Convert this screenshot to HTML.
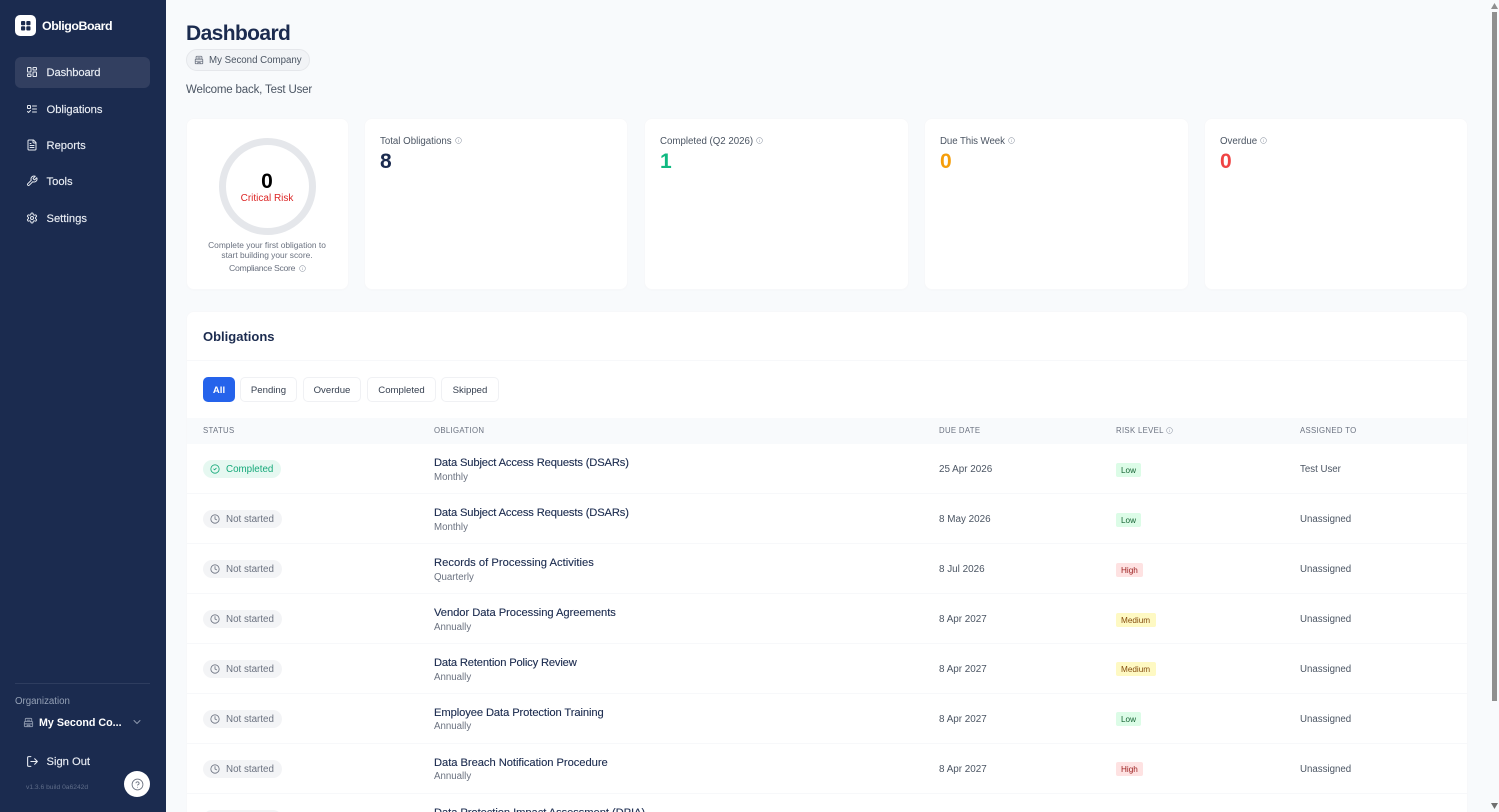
<!DOCTYPE html>
<html lang="en"><head><meta charset="utf-8"><title>ObligoBoard Dashboard</title>
<style>
*{box-sizing:border-box;margin:0;padding:0}
html,body{width:1499px;height:812px;overflow:hidden;background:#f8fafc;font-family:"Liberation Sans",Arial,sans-serif}
#root{position:relative;width:1499px;height:812px;overflow:hidden;background:#f8fafc}
.t{position:absolute;white-space:nowrap;line-height:14px;height:14px}
.b{position:absolute}
svg.i{position:absolute;fill:none;stroke:currentColor;stroke-width:2;stroke-linecap:round;stroke-linejoin:round}
#side{position:absolute;left:0;top:0;width:166px;height:812px;background:#1b2b4f;color:#fff}
.nav{font-size:11.2px;color:#e8ecf3;left:46.5px;-webkit-text-stroke:.15px #e8ecf3}
.nv{left:26px;width:12px;height:12px;color:#e4e8ef}
.card{position:absolute;top:118px;height:172px;background:#fff;border:1px solid #f7f8fa;border-radius:8px;box-shadow:0 1px 2px rgba(0,0,0,.012)}
.ct{top:135px;font-size:9.7px;color:#4b5563}
.cv{top:151px;font-size:21px;line-height:22px;height:22px;font-weight:700}
.f{position:absolute;top:377px;height:25px;background:#fff;border:1px solid #f0f1f4;border-radius:5px;font-size:9.6px;line-height:25px;text-align:center;color:#374151}
.th{top:424px;font-size:7.8px;letter-spacing:.32px;color:#6b7280}
.row{position:absolute;left:187px;width:1280px;height:50px;border-bottom:1px solid #f7f8fa;background:#fff}
.st{position:absolute;left:16px;top:16px;height:18px;border-radius:9px}
.st span{position:absolute;left:23px;top:2.5px;font-size:9.8px;line-height:14px;white-space:nowrap}
.st svg{left:7px;top:3.5px;width:10px;height:10px}
.ok{width:78px;background:#e6f8f1;color:#16a97a}
.ns{width:79px;background:#f3f4f6;color:#6b7280}
.n{left:247px;top:12px;font-size:11.2px;letter-spacing:-.05px;color:#1b2b4f;-webkit-text-stroke:.12px #1b2b4f}
.s{left:247px;top:27px;font-size:9.7px;color:#6b7280}
.d{left:752px;top:19px;font-size:9.9px;color:#4b5563}
.a{left:1113px;top:19px;font-size:9.7px;color:#4b5563}
.r{position:absolute;left:929px;top:19px;height:14px;border-radius:2px;font-size:8.2px;line-height:15px;padding-left:5px}
.lo{width:25px;background:#dcfce7;color:#166534}
.hi{width:27px;background:#fee2e2;color:#991b1b}
.me{width:40px;background:#fef9c3;color:#854d0e}
</style></head><body>
<div id="root">
<svg width="0" height="0" style="position:absolute">
<symbol id="dash" viewBox="0 0 24 24"><rect x="3" y="3" width="7" height="9" rx="1"/><rect x="14" y="3" width="7" height="5" rx="1"/><rect x="14" y="12" width="7" height="9" rx="1"/><rect x="3" y="16" width="7" height="5" rx="1"/></symbol>
<symbol id="todo" viewBox="0 0 24 24"><rect x="3" y="5" width="6" height="6" rx="1"/><path d="m3 17 2 2 4-4M13 6h8M13 12h8M13 18h8"/></symbol>
<symbol id="file" viewBox="0 0 24 24"><path d="M15 2H6a2 2 0 0 0-2 2v16a2 2 0 0 0 2 2h12a2 2 0 0 0 2-2V7Z"/><path d="M14 2v4a2 2 0 0 0 2 2h4M10 9H8M16 13H8M16 17H8"/></symbol>
<symbol id="wrench" viewBox="0 0 24 24"><path d="M14.7 6.3a1 1 0 0 0 0 1.4l1.6 1.6a1 1 0 0 0 1.4 0l3.77-3.77a6 6 0 0 1-7.94 7.94l-6.91 6.91a2.12 2.12 0 0 1-3-3l6.91-6.91a6 6 0 0 1 7.94-7.94l-3.76 3.76z"/></symbol>
<symbol id="gear" viewBox="0 0 24 24"><path d="M12.22 2h-.44a2 2 0 0 0-2 2v.18a2 2 0 0 1-1 1.73l-.43.25a2 2 0 0 1-2 0l-.15-.08a2 2 0 0 0-2.73.73l-.22.38a2 2 0 0 0 .73 2.73l.15.1a2 2 0 0 1 1 1.72v.51a2 2 0 0 1-1 1.74l-.15.09a2 2 0 0 0-.73 2.73l.22.38a2 2 0 0 0 2.73.73l.15-.08a2 2 0 0 1 2 0l.43.25a2 2 0 0 1 1 1.73V20a2 2 0 0 0 2 2h.44a2 2 0 0 0 2-2v-.18a2 2 0 0 1 1-1.73l.43-.25a2 2 0 0 1 2 0l.15.08a2 2 0 0 0 2.73-.73l.22-.39a2 2 0 0 0-.73-2.73l-.15-.08a2 2 0 0 1-1-1.74v-.5a2 2 0 0 1 1-1.74l.15-.09a2 2 0 0 0 .73-2.73l-.22-.38a2 2 0 0 0-2.73-.73l-.15.08a2 2 0 0 1-2 0l-.43-.25a2 2 0 0 1-1-1.73V4a2 2 0 0 0-2-2z"/><circle cx="12" cy="12" r="3"/></symbol>
<symbol id="bld" viewBox="0 0 24 24"><path d="M7 3h10a2 2 0 0 1 2 2v5H5V5a2 2 0 0 1 2-2zM4 10h16a1 1 0 0 1 1 1v9a1 1 0 0 1-1 1H4a1 1 0 0 1-1-1v-9a1 1 0 0 1 1-1zM3 15h18M9 7h6M9 21v-3h6v3"/></symbol>
<symbol id="out" viewBox="0 0 24 24"><path d="M9 21H5a2 2 0 0 1-2-2V5a2 2 0 0 1 2-2h4M16 17l5-5-5-5M21 12H9"/></symbol>
<symbol id="help" viewBox="0 0 24 24"><circle cx="12" cy="12" r="10"/><path d="M9.09 9a3 3 0 0 1 5.83 1c0 2-3 3-3 3M12 17h.01"/></symbol>
<symbol id="clock" viewBox="0 0 24 24"><circle cx="12" cy="12" r="10"/><path d="M12 6v6l4 2"/></symbol>
<symbol id="check" viewBox="0 0 24 24"><circle cx="12" cy="12" r="10"/><path d="m9 12 2 2 4-4"/></symbol>
<symbol id="info" viewBox="0 0 24 24"><circle cx="12" cy="12" r="10"/><path d="M12 16v-4M12 8h.01"/></symbol>
</svg>

<div id="side">
  <div class="b" style="left:15px;top:15px;width:21px;height:21px;background:#fff;border-radius:5px"></div>
  <svg class="b" style="left:15px;top:15px" width="21" height="21"><g fill="#1b2b4f"><rect x="6" y="6" width="4.2" height="4.2" rx="1"/><rect x="11.3" y="6" width="4.2" height="4.2" rx="1"/><rect x="6" y="11.3" width="4.2" height="4.2" rx="1"/><rect x="11.3" y="11.3" width="4.2" height="4.2" rx="1"/></g></svg>
  <div class="t" style="left:42px;top:19px;font-size:12.4px;font-weight:700;letter-spacing:-.45px;color:#fff">ObligoBoard</div>

  <div class="b" style="left:15px;top:57px;width:135px;height:31px;background:#323f60;border-radius:6px"></div>
  <svg class="i nv" style="top:66px"><use href="#dash"/></svg><div class="t nav" style="top:66px;letter-spacing:-.1px">Dashboard</div>
  <svg class="i nv" style="top:103px"><use href="#todo"/></svg><div class="t nav" style="top:103px">Obligations</div>
  <svg class="i nv" style="top:139px"><use href="#file"/></svg><div class="t nav" style="top:139px">Reports</div>
  <svg class="i nv" style="top:175px"><use href="#wrench"/></svg><div class="t nav" style="top:175px">Tools</div>
  <svg class="i nv" style="top:212px"><use href="#gear"/></svg><div class="t nav" style="top:212px">Settings</div>

  <div class="b" style="left:15px;top:683px;width:135px;height:1px;background:#2e3d5f"></div>
  <div class="t" style="left:15px;top:695px;font-size:9.7px;color:#94a0b5">Organization</div>
  <svg class="i" style="left:23px;top:717px;width:11px;height:11px;color:#8d98ad"><use href="#bld"/></svg>
  <div class="t" style="left:39px;top:716px;font-size:10.7px;font-weight:700;color:#fff">My Second Co...</div>
  <svg class="i" style="left:133px;top:718px;width:8px;height:8px;color:#8d98ad"><path d="M1 2.5 4 5.5 7 2.5" stroke-width="1"/></svg>
  <svg class="i" style="left:26px;top:755px;width:13px;height:13px;color:#e8ecf3"><use href="#out"/></svg>
  <div class="t nav" style="top:755px">Sign Out</div>
  <div class="t" style="left:26px;top:781px;font-size:6.7px;color:#5f6d89">v1.3.6 build 0a6242d</div>
  <div class="b" style="left:124px;top:771px;width:26px;height:26px;background:#fff;border-radius:50%"></div>
  <svg class="i" style="left:131px;top:778px;width:13px;height:13px;color:#6b7280;stroke-width:1.6"><use href="#help"/></svg>
</div>

<div class="t" style="left:186px;top:22px;height:24px;line-height:24px;font-size:21px;font-weight:700;letter-spacing:-.6px;color:#1b2b4f">Dashboard</div>
<div class="b" style="left:186px;top:49px;width:124px;height:22px;background:#f1f3f6;border:1px solid #e5e7eb;border-radius:11px"></div>
<svg class="i" style="left:194px;top:55px;width:10px;height:10px;color:#6b7280"><use href="#bld"/></svg>
<div class="t" style="left:209px;top:54px;font-size:9.7px;color:#4b5563">My Second Company</div>
<div class="t" style="left:186px;top:83px;font-size:11.5px;letter-spacing:-.17px;color:#4b5563">Welcome back, Test User</div>

<div class="card" style="left:186px;width:163px"></div>
<svg class="b" style="left:219px;top:138px" width="97" height="97"><circle cx="48.5" cy="48.5" r="45" fill="none" stroke="#e5e7eb" stroke-width="7"/></svg>
<div class="t" style="left:217px;width:100px;text-align:center;top:171px;height:22px;line-height:22px;font-size:21px;font-weight:700;color:#000">0</div>
<div class="t" style="left:217px;width:100px;text-align:center;top:192px;font-size:10px;color:#dc2626">Critical Risk</div>
<div class="t" style="left:187px;width:160px;text-align:center;top:238px;font-size:8.4px;color:#6b7280">Complete your first obligation to</div>
<div class="t" style="left:187px;width:160px;text-align:center;top:248px;font-size:8.4px;color:#6b7280">start building your score.</div>
<div class="t" style="left:229px;top:261px;font-size:8.7px;letter-spacing:-.3px;color:#6b7280">Compliance Score</div>
<svg class="i" style="left:299px;top:265px;width:7px;height:7px;color:#9ca3af"><use href="#info"/></svg>

<div class="card" style="left:364px;width:264px"></div>
<div class="t ct" style="left:380px">Total Obligations</div>
<svg class="i" style="left:455px;top:137px;width:7px;height:7px;color:#9ca3af"><use href="#info"/></svg>
<div class="t cv" style="left:380px;color:#1b2b4f">8</div>

<div class="card" style="left:644px;width:265px"></div>
<div class="t ct" style="left:660px">Completed (Q2 2026)</div>
<svg class="i" style="left:756px;top:137px;width:7px;height:7px;color:#9ca3af"><use href="#info"/></svg>
<div class="t cv" style="left:660px;color:#10b981">1</div>

<div class="card" style="left:924px;width:265px"></div>
<div class="t ct" style="left:940px;letter-spacing:-.08px">Due This Week</div>
<svg class="i" style="left:1008px;top:137px;width:7px;height:7px;color:#9ca3af"><use href="#info"/></svg>
<div class="t cv" style="left:940px;color:#f59e0b">0</div>

<div class="card" style="left:1204px;width:264px"></div>
<div class="t ct" style="left:1220px">Overdue</div>
<svg class="i" style="left:1260px;top:137px;width:7px;height:7px;color:#9ca3af"><use href="#info"/></svg>
<div class="t cv" style="left:1220px;color:#ef4444">0</div>

<div class="b" style="left:186px;top:311px;width:1282px;height:520px;background:#fff;border:1px solid #f7f8fa;border-radius:8px"></div>
<div class="t" style="left:203px;top:330px;font-size:13px;font-weight:700;color:#1b2b4f">Obligations</div>
<div class="b" style="left:187px;top:360px;width:1280px;height:1px;background:#f7f8fa"></div>
<div class="f" style="left:203px;width:32px;background:#2563eb;border-color:#2563eb;color:#fff;font-weight:700">All</div>
<div class="f" style="left:240px;width:57px">Pending</div>
<div class="f" style="left:303px;width:58px">Overdue</div>
<div class="f" style="left:367px;width:69px">Completed</div>
<div class="f" style="left:441px;width:58px">Skipped</div>

<div class="b" style="left:187px;top:418px;width:1280px;height:26px;background:#f8fafc"></div>
<div class="t th" style="left:203px">STATUS</div>
<div class="t th" style="left:434px">OBLIGATION</div>
<div class="t th" style="left:939px">DUE DATE</div>
<div class="t th" style="left:1116px">RISK LEVEL</div>
<svg class="i" style="left:1166px;top:427px;width:7px;height:7px;color:#9ca3af"><use href="#info"/></svg>
<div class="t th" style="left:1300px">ASSIGNED TO</div>

<div class="row" style="top:444px">
  <div class="st ok"><svg class="i"><use href="#check"/></svg><span>Completed</span></div>
  <div class="t n" style="letter-spacing:-.15px">Data Subject Access Requests (DSARs)</div><div class="t s">Monthly</div>
  <div class="t d">25 Apr 2026</div><div class="r lo">Low</div><div class="t a">Test User</div>
</div>
<div class="row" style="top:494px">
  <div class="st ns"><svg class="i"><use href="#clock"/></svg><span>Not started</span></div>
  <div class="t n" style="letter-spacing:-.15px">Data Subject Access Requests (DSARs)</div><div class="t s">Monthly</div>
  <div class="t d">8 May 2026</div><div class="r lo">Low</div><div class="t a">Unassigned</div>
</div>
<div class="row" style="top:544px">
  <div class="st ns"><svg class="i"><use href="#clock"/></svg><span>Not started</span></div>
  <div class="t n" style="letter-spacing:.02px">Records of Processing Activities</div><div class="t s">Quarterly</div>
  <div class="t d">8 Jul 2026</div><div class="r hi">High</div><div class="t a">Unassigned</div>
</div>
<div class="row" style="top:594px">
  <div class="st ns"><svg class="i"><use href="#clock"/></svg><span>Not started</span></div>
  <div class="t n">Vendor Data Processing Agreements</div><div class="t s">Annually</div>
  <div class="t d">8 Apr 2027</div><div class="r me">Medium</div><div class="t a">Unassigned</div>
</div>
<div class="row" style="top:644px">
  <div class="st ns"><svg class="i"><use href="#clock"/></svg><span>Not started</span></div>
  <div class="t n" style="letter-spacing:-.17px">Data Retention Policy Review</div><div class="t s">Annually</div>
  <div class="t d">8 Apr 2027</div><div class="r me" style="top:18px">Medium</div><div class="t a">Unassigned</div>
</div>
<div class="row" style="top:694px">
  <div class="st ns"><svg class="i"><use href="#clock"/></svg><span>Not started</span></div>
  <div class="t n" style="letter-spacing:-.1px">Employee Data Protection Training</div><div class="t s" style="top:26px">Annually</div>
  <div class="t d">8 Apr 2027</div><div class="r lo" style="top:18px">Low</div><div class="t a">Unassigned</div>
</div>
<div class="row" style="top:744px">
  <div class="st ns"><svg class="i"><use href="#clock"/></svg><span>Not started</span></div>
  <div class="t n">Data Breach Notification Procedure</div><div class="t s" style="top:26px">Annually</div>
  <div class="t d">8 Apr 2027</div><div class="r hi" style="top:18px">High</div><div class="t a">Unassigned</div>
</div>
<div class="row" style="top:794px">
  <div class="st ns"><svg class="i"><use href="#clock"/></svg><span>Not started</span></div>
  <div class="t n" style="letter-spacing:-.07px">Data Protection Impact Assessment (DPIA)</div>
</div>

<div class="b" style="left:1490px;top:0;width:9px;height:812px;background:#f8fafc"></div>
<div class="b" style="left:1492px;top:12px;width:5px;height:689px;background:#8f8f8f"></div>
<svg class="b" style="left:1490px;top:2px" width="9" height="8"><path d="M4.5 1 8 7H1z" fill="#8f8f8f"/></svg>
<svg class="b" style="left:1490px;top:802px" width="9" height="8"><path d="M1 1h7L4.5 7z" fill="#6f6f6f"/></svg>
</div>
</body></html>
